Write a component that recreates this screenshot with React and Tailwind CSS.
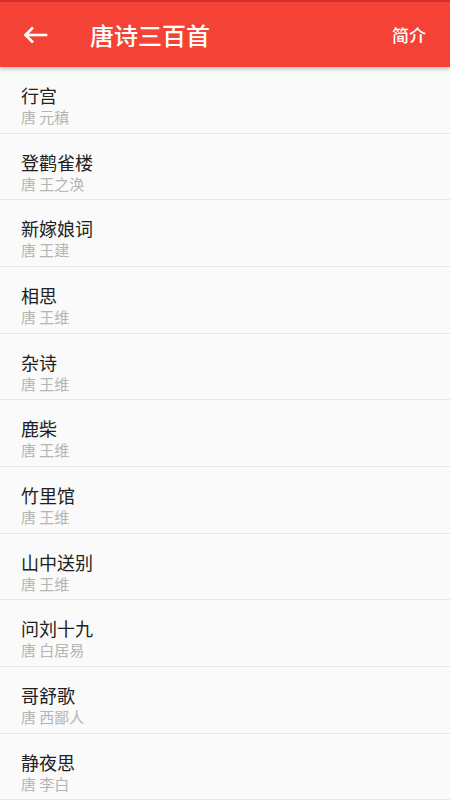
import React from "react";

const poems = [
  { title: "行宫", author: "唐 元稹" },
  { title: "登鹳雀楼", author: "唐 王之涣" },
  { title: "新嫁娘词", author: "唐 王建" },
  { title: "相思", author: "唐 王维" },
  { title: "杂诗", author: "唐 王维" },
  { title: "鹿柴", author: "唐 王维" },
  { title: "竹里馆", author: "唐 王维" },
  { title: "山中送别", author: "唐 王维" },
  { title: "问刘十九", author: "唐 白居易" },
  { title: "哥舒歌", author: "唐 西鄙人" },
  { title: "静夜思", author: "唐 李白" },
];

export default function App() {
  return (
    <div
      className="w-[450px] h-[800px] overflow-hidden bg-[#fafafa] flex flex-col"
      style={{ fontFamily: '"Noto Sans CJK SC", "Noto Sans", sans-serif' }}
    >
      {/* header */}
      <div className="relative z-10 h-[67px] shrink-0 bg-[#f44336] border-t-2 border-[#d32f2f] shadow-[0_2px_4px_rgba(0,0,0,0.25)] flex items-center pl-[23px] pr-6">
        <svg width="25" height="20" viewBox="0 0 25 20" fill="none" stroke="white" strokeWidth="2.6" strokeLinecap="square">
          <path d="M3 10H23" />
          <path d="M10 2.5L2.5 10L10 17.5" strokeLinecap="butt" />
        </svg>
        <div className="ml-[42px] text-white text-[24px] font-medium leading-none">
          唐诗三百首
        </div>
        <div className="ml-auto text-white text-[17px] font-medium">简介</div>
      </div>

      {/* list */}
      <div className="flex flex-col">
        {poems.map((p, i) => (
          <div
            key={i}
            className="h-[66.67px] shrink-0 border-b border-[#e6e6e6] px-[21px] pt-[15px] flex flex-col"
          >
            <div className="text-[18px] leading-[26px] text-[#212121]">{p.title}</div>
            <div className="text-[15px] leading-[18px] text-[#b5b5b5]">{p.author}</div>
          </div>
        ))}
      </div>
    </div>
  );
}
